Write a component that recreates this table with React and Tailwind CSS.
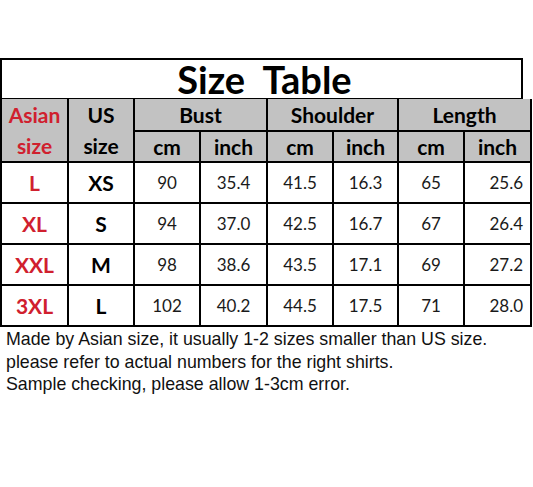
import React from "react";

const rows = [
  ["L", "XS", "90", "35.4", "41.5", "16.3", "65", "25.6"],
  ["XL", "S", "94", "37.0", "42.5", "16.7", "67", "26.4"],
  ["XXL", "M", "98", "38.6", "43.5", "17.1", "69", "27.2"],
  ["3XL", "L", "102", "40.2", "44.5", "17.5", "71", "28.0"],
];

export default function App() {
  const hd = "border-2 border-black bg-[#c2c2c2] text-[21px] font-bold p-0 text-center align-middle leading-none";
  return (
    <div className="w-[533px] h-[487px] bg-white pt-[58px] font-['Lato',sans-serif] overflow-hidden">
      <div className="w-[523px] h-[42px] border-2 border-black flex items-center justify-center pl-[6px] text-[38px] font-bold text-black leading-none">
        Size&nbsp; Table
      </div>
      <table className="table-fixed border-collapse w-[530px] -mt-[1px]">
        <colgroup>
          <col className="w-[67px]" />
          <col className="w-[66px]" />
          <col className="w-[66px]" />
          <col className="w-[67px]" />
          <col className="w-[66px]" />
          <col className="w-[65px]" />
          <col className="w-[66px]" />
          <col className="w-[67px]" />
        </colgroup>
        <tbody>
          <tr className="h-[31px]">
            <td rowSpan={2} className={hd + " border-t-0 text-[#d0202e]"}>
              <div className="flex flex-col">
                <span className="h-[31px] flex items-center justify-center">Asian</span>
                <span className="h-[31px] flex items-center justify-center">size</span>
              </div>
            </td>
            <td rowSpan={2} className={hd + " border-t-0 text-black"}>
              <div className="flex flex-col">
                <span className="h-[31px] flex items-center justify-center">US</span>
                <span className="h-[31px] flex items-center justify-center">size</span>
              </div>
            </td>
            <td colSpan={2} className={hd + " border-t-0 text-black"}>Bust</td>
            <td colSpan={2} className={hd + " border-t-0 text-black"}>Shoulder</td>
            <td colSpan={2} className={hd + " border-t-0 text-black"}>Length</td>
          </tr>
          <tr className="h-[31px]">
            <td className={hd + " text-black"}>cm</td>
            <td className={hd + " text-black"}>inch</td>
            <td className={hd + " text-black"}>cm</td>
            <td className={hd + " text-black"}>inch</td>
            <td className={hd + " text-black"}>cm</td>
            <td className={hd + " text-black"}>inch</td>
          </tr>
          {rows.map((r) => (
            <tr key={r[0]} className="h-[41px]">
              <td className="border-2 border-black text-center align-middle text-[21px] font-bold text-[#d0202e] p-0 leading-none">{r[0]}</td>
              <td className="border-2 border-black text-center align-middle text-[21px] font-bold text-black p-0 leading-none">{r[1]}</td>
              {r.slice(2).map((v, i) => (
                <td
                  key={i}
                  className={
                    i === 5
                      ? "border-2 border-black text-right pr-[7px] align-middle text-[17px] text-[#1a1a1a] p-0 leading-none"
                      : "border-2 border-black text-center align-middle text-[17px] text-[#1a1a1a] p-0 leading-none"
                  }
                >
                  {v}
                </td>
              ))}
            </tr>
          ))}
        </tbody>
      </table>
      <div className="pl-[6px] pt-[1px] font-['Liberation_Sans',Arial,sans-serif] text-[17.8px] leading-[22.5px] text-[#111]">
        <p>Made by Asian size, it usually 1-2 sizes smaller than US size.</p>
        <p>please refer to actual numbers for the right shirts.</p>
        <p>Sample checking, please allow 1-3cm error.</p>
      </div>
    </div>
  );
}
